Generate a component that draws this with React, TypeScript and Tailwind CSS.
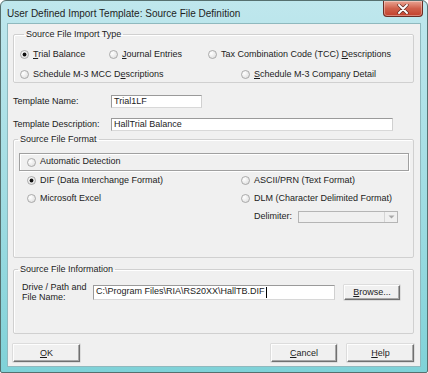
import React from "react";

function Radio({ checked }: { checked?: boolean }) {
  return (
    <svg width="9" height="9" viewBox="0 0 9 9" className="shrink-0">
      <defs>
        <radialGradient id="rg" cx="0.35" cy="0.35" r="0.8">
          <stop offset="0" stopColor="#ffffff" />
          <stop offset="1" stopColor="#dcdcdc" />
        </radialGradient>
      </defs>
      <circle cx="4.5" cy="4.5" r="4" fill="url(#rg)" stroke="#9a9b9b" strokeWidth="0.8" />
      {checked && <circle cx="4.5" cy="4.5" r="1.9" fill="#111" />}
    </svg>
  );
}

function Opt({ checked, children, className = "" }: { checked?: boolean; children: React.ReactNode; className?: string }) {
  return (
    <div className={"flex items-center gap-[4px] h-[11px] " + className}>
      <Radio checked={checked} />
      <span className="whitespace-nowrap">{children}</span>
    </div>
  );
}

function Group({ title, className = "", children }: { title: string; className?: string; children: React.ReactNode }) {
  return (
    <fieldset className={"border border-[#d0d0d0] rounded-[2px] shadow-[inset_1px_1px_0_#ffffff] " + className}>
      <legend className="ml-[4px] px-[2px] leading-[11px]">{title}</legend>
      {children}
    </fieldset>
  );
}

function Box({ className = "", children }: { className?: string; children?: React.ReactNode }) {
  return (
    <div className={"bg-white border border-[#9a9a9a] border-b-[#d8d8d8] border-r-[#d0d0d0] flex items-center pl-[2px] whitespace-nowrap " + className}>
      {children}
    </div>
  );
}

function Btn({ className = "", children }: { className?: string; children: React.ReactNode }) {
  return (
    <button className={"bg-[#f0f0f0] border border-t-[#fdfdfd] border-l-[#fdfdfd] border-r-[#707070] border-b-[#707070] shadow-[inset_-1px_-1px_0_#a8a8a8,0_0_0_0.5px_#c8c8c8] flex items-center justify-center leading-[11px] " + className}>
      {children}
    </button>
  );
}

export default function App() {
  return (
    <div className="w-[428px] h-[373px] bg-gradient-to-b from-[#bfe7ed] via-[#a2dde3] to-[#7fd2d8] border border-[#56706f] rounded-t-[6px] rounded-b-[2px] font-['Liberation_Sans',Arial,sans-serif] text-[9px] text-[#1c1c1c] overflow-hidden">
      {/* Title bar */}
      <div className="h-[22px] flex items-start justify-between">
        <div className="pl-[6px] pt-[7px] text-[10px] leading-[12px] text-[#1e1e1e]">User Defined Import Template: Source File Definition</div>
        <div className="mr-[4px] w-[40px] h-[16px] rounded-b-[4px] border border-t-0 border-[#6b2c23] bg-gradient-to-b from-[#e9a493] via-[#d0604b] to-[#c2402b] flex items-center justify-center shadow-[inset_0_0_0_1px_rgba(255,255,255,0.35)]">
          <svg width="12" height="10" viewBox="0 0 12 10">
            <path d="M2 1 L10 9 M10 1 L2 9" stroke="#5a2a22" strokeWidth="3.2" strokeLinecap="round" />
            <path d="M2 1 L10 9 M10 1 L2 9" stroke="#ffffff" strokeWidth="1.9" strokeLinecap="round" />
          </svg>
        </div>
      </div>

      {/* Client area */}
      <div className="ml-[6px] w-[414px] h-[344px] bg-[#f0f0f0] border border-[#8fb9be] flex flex-col pl-[5px] pr-[6px]">
        <Group title="Source File Import Type" className="mt-[5px] pb-[2px] pl-[6px]">
          <div className="flex mt-[9px]">
            <Opt checked className="w-[89px]"><u>T</u>rial Balance</Opt>
            <Opt className="w-[99px]"><u>J</u>ournal Entries</Opt>
            <Opt>Tax Combination Code (TCC) <u>D</u>escriptions</Opt>
          </div>
          <div className="flex mt-[9px]">
            <Opt className="w-[221px]">Schedule M-3 MCC D<u>e</u>scriptions</Opt>
            <Opt><u>S</u>chedule M-3 Company Detail</Opt>
          </div>
        </Group>

        <div className="flex items-center mt-[12px]">
          <div className="w-[98px]">Template Name:</div>
          <Box className="w-[91px] h-[13px]">Trial1LF</Box>
        </div>
        <div className="flex items-center mt-[9px]">
          <div className="w-[98px]">Template Description:</div>
          <Box className="w-[282px] h-[13px]">HallTrial Balance</Box>
        </div>

        <Group title="Source File Format" className="mt-[3px] pb-[34px]">
          <div className="mt-[8px] ml-[5px] mr-[4px] h-[18px] border border-[#a0a0a0] shadow-[inset_1px_1px_0_#ffffff,1px_1px_0_#ffffff] flex items-center pl-[7px]">
            <Opt>Automatic Detection</Opt>
          </div>
          <div className="flex mt-[4px] pl-[13px]">
            <Opt checked className="w-[214px]">DIF (Data Interchange Format)</Opt>
            <Opt>ASCII/PRN (Text Format)</Opt>
          </div>
          <div className="flex mt-[7px] pl-[13px]">
            <Opt className="w-[214px]">Microsoft Excel</Opt>
            <Opt>DLM (Character Delimited Format)</Opt>
          </div>
          <div className="flex items-center mt-[7px] ml-[240px] h-[12px]">
            <div className="w-[44px]">Delimiter:</div>
            <div className="w-[100px] h-[12px] border border-[#b5b5b5] bg-[#f0f0f0] flex justify-end">
              <div className="w-[13px] h-full border-l border-[#d5d5d5] flex items-center justify-center">
                <svg width="7" height="4" viewBox="0 0 7 4">
                  <path d="M0.5 0.5 L6.5 0.5 L3.5 3.5 Z" fill="#a8a8a8" />
                </svg>
              </div>
            </div>
          </div>
        </Group>

        <Group title="Source File Information" className="mt-[6px] pb-[31px]">
          <div className="flex items-center mt-[7px] pl-[8px]">
            <div className="w-[71px] leading-[10px]">
              Drive / Path and
              <br />
              File Name:
            </div>
            <Box className="w-[242px] h-[15px]">
              C:\Program Files\RIA\RS20XX\HallTB.DIF
              <span className="inline-block w-px h-[11px] bg-black ml-px" />
            </Box>
            <Btn className="ml-[9px] w-[56px] h-[15px]"><span><u>B</u>rowse...</span></Btn>
          </div>
        </Group>

        <div className="flex mt-[10px]">
          <Btn className="w-[67px] h-[18px]"><span><u>O</u>K</span></Btn>
          <Btn className="ml-auto w-[66px] h-[18px]"><span><u>C</u>ancel</span></Btn>
          <Btn className="ml-[10px] w-[67px] h-[18px]"><span><u>H</u>elp</span></Btn>
        </div>
      </div>
    </div>
  );
}
